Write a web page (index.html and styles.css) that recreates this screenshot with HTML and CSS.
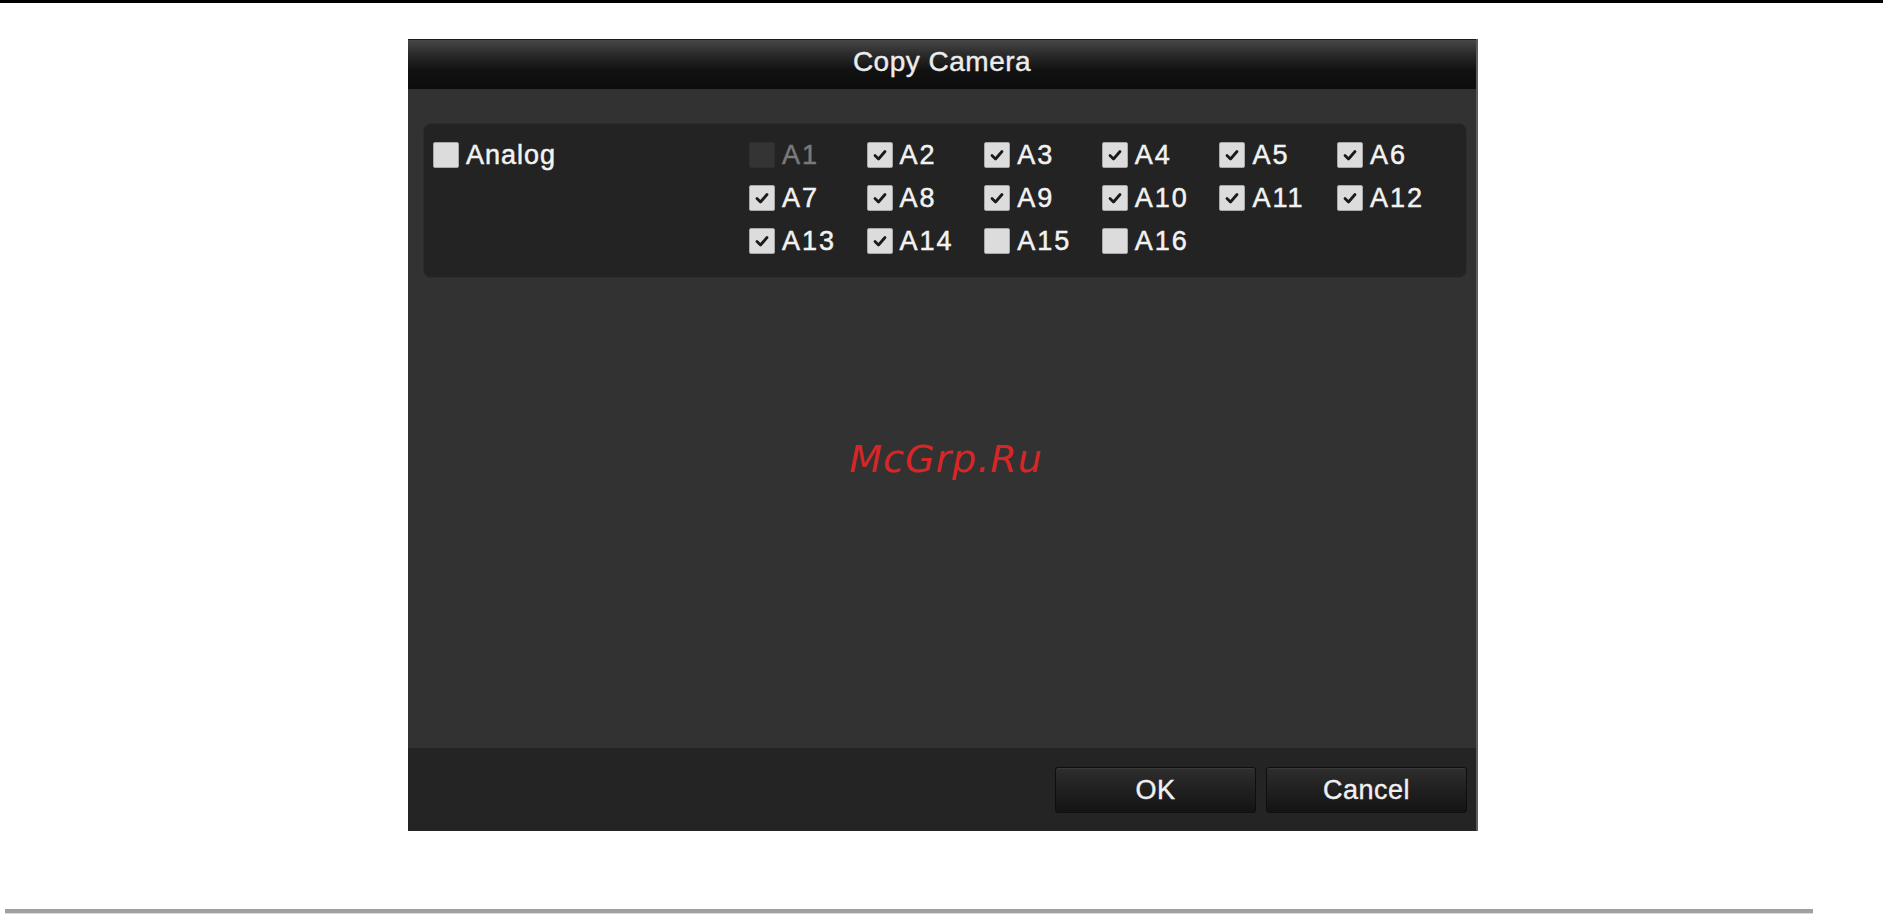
FILE: index.html
```html
<!DOCTYPE html>
<html lang="en">
<head>
<meta charset="utf-8">
<title>Copy Camera</title>
<link rel="stylesheet" href="styles.css">
</head>
<body>
<div class="page">
  <div class="dialog">
    <div class="titlebar">Copy Camera</div>
    <div class="body">
      <div class="group">
        <label class="item analog"><span class="box"></span><span class="txt">Analog</span></label>
        <div class="channels">
          <label class="item disabled"><span class="box"></span><span class="txt">A1</span></label>
          <label class="item"><span class="box on"><svg viewBox="0 0 24 24"><path d="M7 12.5 L10.5 16 L17 8.5"/></svg></span><span class="txt">A2</span></label>
          <label class="item"><span class="box on"><svg viewBox="0 0 24 24"><path d="M7 12.5 L10.5 16 L17 8.5"/></svg></span><span class="txt">A3</span></label>
          <label class="item"><span class="box on"><svg viewBox="0 0 24 24"><path d="M7 12.5 L10.5 16 L17 8.5"/></svg></span><span class="txt">A4</span></label>
          <label class="item"><span class="box on"><svg viewBox="0 0 24 24"><path d="M7 12.5 L10.5 16 L17 8.5"/></svg></span><span class="txt">A5</span></label>
          <label class="item"><span class="box on"><svg viewBox="0 0 24 24"><path d="M7 12.5 L10.5 16 L17 8.5"/></svg></span><span class="txt">A6</span></label>
          <label class="item"><span class="box on"><svg viewBox="0 0 24 24"><path d="M7 12.5 L10.5 16 L17 8.5"/></svg></span><span class="txt">A7</span></label>
          <label class="item"><span class="box on"><svg viewBox="0 0 24 24"><path d="M7 12.5 L10.5 16 L17 8.5"/></svg></span><span class="txt">A8</span></label>
          <label class="item"><span class="box on"><svg viewBox="0 0 24 24"><path d="M7 12.5 L10.5 16 L17 8.5"/></svg></span><span class="txt">A9</span></label>
          <label class="item"><span class="box on"><svg viewBox="0 0 24 24"><path d="M7 12.5 L10.5 16 L17 8.5"/></svg></span><span class="txt">A10</span></label>
          <label class="item"><span class="box on"><svg viewBox="0 0 24 24"><path d="M7 12.5 L10.5 16 L17 8.5"/></svg></span><span class="txt">A11</span></label>
          <label class="item"><span class="box on"><svg viewBox="0 0 24 24"><path d="M7 12.5 L10.5 16 L17 8.5"/></svg></span><span class="txt">A12</span></label>
          <label class="item"><span class="box on"><svg viewBox="0 0 24 24"><path d="M7 12.5 L10.5 16 L17 8.5"/></svg></span><span class="txt">A13</span></label>
          <label class="item"><span class="box on"><svg viewBox="0 0 24 24"><path d="M7 12.5 L10.5 16 L17 8.5"/></svg></span><span class="txt">A14</span></label>
          <label class="item"><span class="box"></span><span class="txt">A15</span></label>
          <label class="item"><span class="box"></span><span class="txt">A16</span></label>
        </div>
      </div>
      <div class="watermark">McGrp.Ru</div>
    </div>
    <div class="footer">
      <button class="btn">OK</button>
      <button class="btn">Cancel</button>
    </div>
  </div>
  <div class="rule"></div>
</div>
</body>
</html>
```
FILE: styles.css
```css
html, body {
  margin: 0;
  padding: 0;
  background: #ffffff;
}

.page {
  width: 1883px;
  height: 914px;
  border-top: 3px solid #000000;
  padding-top: 36px;
  box-sizing: border-box;
  font-family: "Liberation Sans", Arial, sans-serif;
}

.dialog {
  margin-left: 408px;
  width: 1068px;
  height: 792px;
  border-right: 2px solid #5c5c5c;
  display: flex;
  flex-direction: column;
  position: relative;
}

.titlebar {
  height: 50px;
  box-sizing: border-box;
  padding-bottom: 6px;
  line-height: 44px;
  text-align: center;
  font-size: 28px;
  letter-spacing: 0.5px;
  color: #ececec;
  -webkit-text-stroke: 0.4px #ececec;
  background: linear-gradient(to bottom, #474747 0%, #2a2a2a 30%, #111111 62%, #0d0d0d 100%);
  border-top: 1px solid #1a1a1a;
}

.body {
  flex: 1;
  background: #323232;
  padding: 34px 9px 0 15px;
  position: relative;
}

.group {
  height: 155px;
  box-sizing: border-box;
  background: #232323;
  border: 1px solid #2c2c2c;
  border-radius: 8px;
  padding: 18px 9px 23px;
  display: flex;
}

.analog {
  width: 316px;
  flex: none;
  align-self: flex-start;
}

.analog .txt {
  letter-spacing: 1px;
}

.channels {
  display: grid;
  grid-template-columns: repeat(6, 117.6px);
  grid-auto-rows: 26px;
  row-gap: 17px;
}

.item {
  display: flex;
  align-items: center;
  height: 26px;
}

.box {
  width: 24px;
  height: 24px;
  flex: none;
  background: #dcdcdc;
  border: 1px solid #a8a8a8;
  border-radius: 2px;
  display: flex;
  align-items: center;
  justify-content: center;
}

.box svg {
  width: 24px;
  height: 24px;
}

.box svg path {
  fill: none;
  stroke: #1a1a1a;
  stroke-width: 2.8;
  stroke-linecap: round;
  stroke-linejoin: round;
}

.txt {
  margin-left: 7px;
  font-size: 27px;
  line-height: 26px;
  letter-spacing: 2px;
  color: #f2f2f2;
  -webkit-text-stroke: 0.5px #f2f2f2;
  white-space: nowrap;
}

.disabled .box {
  background: #343434;
  border-color: #2e2e2e;
}

.disabled .txt {
  color: #7a7a7a;
  -webkit-text-stroke: 0.5px #7a7a7a;
}

.watermark {
  position: absolute;
  left: 0;
  right: 0;
  top: 351px;
  text-align: center;
  font-family: "DejaVu Sans", sans-serif;
  font-style: oblique;
  font-size: 38px;
  line-height: 38px;
  letter-spacing: 1px;
  color: #d82626;
  padding-left: 8px;
}

.footer {
  height: 83px;
  box-sizing: border-box;
  background: #242424;
  display: flex;
  justify-content: flex-end;
  gap: 10px;
  padding: 19px 9px 0 0;
}

.btn {
  width: 201px;
  height: 46px;
  box-sizing: border-box;
  border: 1px solid #0e0e0e;
  border-radius: 3px;
  background: linear-gradient(to bottom, #2e2e2e 0%, #202020 50%, #141414 100%);
  box-shadow: inset 0 1px 0 #3a3a3a;
  color: #f0f0f0;
  -webkit-text-stroke: 0.4px #f0f0f0;
  font-family: "Liberation Sans", Arial, sans-serif;
  font-size: 27px;
  line-height: 44px;
  letter-spacing: 0.5px;
  padding: 0;
  text-align: center;
}

.rule {
  margin-top: 78px;
  margin-left: 5px;
  width: 1808px;
  height: 4px;
  background: #a0a0a0;
  border-bottom: 1px solid #dadada;
}
```
